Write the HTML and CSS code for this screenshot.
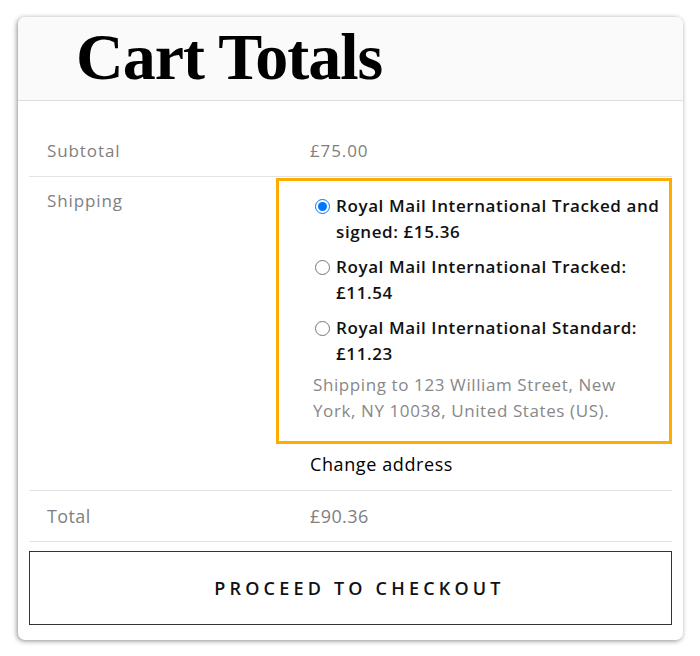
FILE: index.html
```html
<!DOCTYPE html>
<html lang="en">
<head>
    <meta charset="UTF-8">
    <meta name="viewport" content="width=device-width, initial-scale=1.0">
    <title>Cart Totals</title>
    <link rel="stylesheet" href="styles.css">
</head>
<body>
    <div class="card">
        <div class="card-head">
            <h2>Cart Totals</h2>
        </div>
        <table class="totals">
            <colgroup>
                <col class="col-label">
                <col>
            </colgroup>
            <tr class="row-subtotal">
                <th>Subtotal</th>
                <td>£75.00</td>
            </tr>
            <tr class="row-shipping">
                <th>Shipping</th>
                <td>
                    <div class="methods">
                        <label class="method">
                            <input type="radio" name="ship" checked>
                            <span>Royal Mail International Tracked and signed: £15.36</span>
                        </label>
                        <label class="method">
                            <input type="radio" name="ship">
                            <span>Royal Mail International Tracked: £11.54</span>
                        </label>
                        <label class="method">
                            <input type="radio" name="ship">
                            <span>Royal Mail International Standard: £11.23</span>
                        </label>
                        <p class="destination">Shipping to 123 William Street, New York, NY 10038, United States (US).</p>
                    </div>
                    <a class="change" href="#">Change address</a>
                </td>
            </tr>
            <tr class="row-total">
                <th>Total</th>
                <td>£90.36</td>
            </tr>
        </table>
        <div class="checkout">
            <a href="#" class="checkout-btn">Proceed to checkout</a>
        </div>
    </div>
</body>
</html>
```

FILE: styles.css
```css
body {
    margin: 0;
    padding: 17px 17px 16px 18px;
    background: #fff;
    font-family: "Open Sans", sans-serif;
}
.card {
    width: 665px;
    height: 623px;
    box-sizing: border-box;
    background: #fff;
    border-radius: 7px;
    box-shadow: -1px 1px 5px rgba(0, 0, 0, 0.45);
    overflow: hidden;
}
.card-head {
    height: 83px;
    background: #fafafa;
    border-bottom: 1px solid #ddd;
    padding-left: 58px;
}
.card-head h2 {
    margin: 0;
    font-family: "Liberation Serif", serif;
    font-weight: bold;
    font-size: 66px;
    line-height: 80px;
    letter-spacing: -1px;
    color: #000;
}
.totals {
    width: 643px;
    margin: 25px 0 0 11px;
    border-collapse: collapse;
    table-layout: fixed;
}
.col-label {
    width: 247px;
}
.totals th,
.totals td {
    text-align: left;
    vertical-align: top;
    font-size: 17px;
    font-weight: 500;
    letter-spacing: 0.9px;
    color: #808080;
    border-bottom: 1px solid #e3e3e3;
    padding: 0;
}
.totals th {
    padding: 13px 18px 0;
}
.totals td {
    padding: 13px 0 0 34px;
}
.row-subtotal th,
.row-subtotal td {
    height: 37px;
}
.row-shipping td {
    padding: 1px 0 0 0;
    height: 312px;
}
.row-shipping th {
    padding-top: 12px;
}
.row-total th,
.row-total td {
    height: 37px;
    padding-top: 13px;
    font-size: 18px;
    font-weight: normal;
    letter-spacing: 0.4px;
}
.methods {
    border: 3px solid #ffab00;
    padding: 12px 6px 17px 34px;
}
.method {
    display: flex;
    align-items: flex-start;
    color: #111;
    font-weight: 600;
    font-size: 17px;
    letter-spacing: 0.6px;
    line-height: 26px;
    margin-bottom: 9px;
}
.method input {
    margin: 6px 6px 0 2px;
    width: 15px;
    height: 15px;
    flex: none;
}
.destination {
    margin: -4px 0 0;
    color: #888;
    font-size: 17px;
    font-weight: 500;
    letter-spacing: 0.6px;
    line-height: 26px;
}
.change {
    display: block;
    padding: 8px 0 0 34px;
    font-size: 18px;
    letter-spacing: 0.6px;
    color: #000;
    text-decoration: none;
}
.checkout {
    padding: 9px 11px 0;
}
.checkout-btn {
    display: block;
    height: 72px;
    line-height: 72px;
    padding-left: 18px;
    border: 1px solid #333;
    text-align: center;
    text-transform: uppercase;
    letter-spacing: 4.2px;
    font-size: 18px;
    font-weight: 600;
    color: #111;
    text-decoration: none;
}
```
